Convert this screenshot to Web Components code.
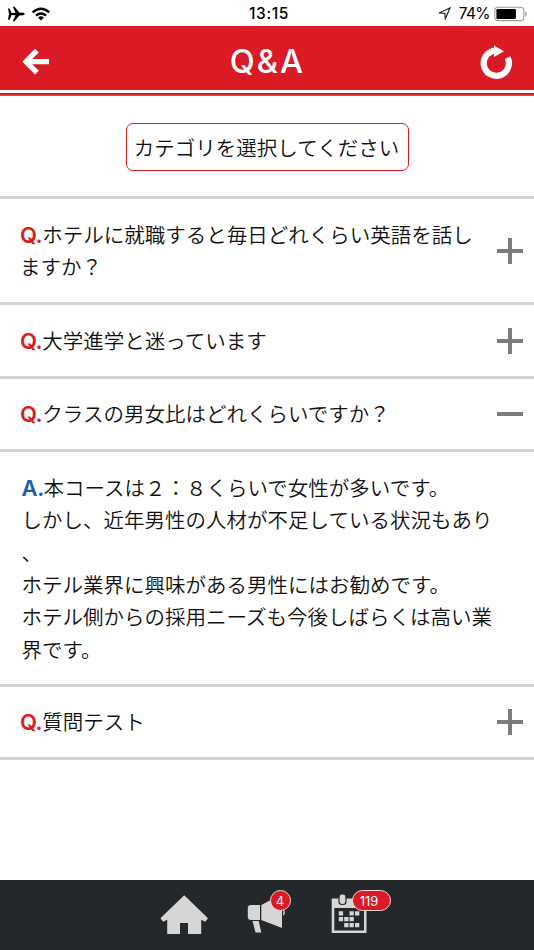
<!DOCTYPE html>
<html lang="ja">
<head>
<meta charset="utf-8">
<title>Q&amp;A</title>
<style>
html,body{margin:0;height:100%;background:#fff}
body{font-family:"Noto Sans CJK JP",sans-serif;color:#111}
</style>
</head>
<body>
<qa-app></qa-app>
<script>
const define = (name, html, init) => customElements.define(name, class extends HTMLElement {
  constructor() {
    super();
    const t = document.createElement('template');
    t.innerHTML = html;
    this.attachShadow({mode: 'open'}).append(t.content.cloneNode(true));
  }
  connectedCallback() { if (init) init(this, this.shadowRoot); }
});

define('status-bar', `
<style>
:host{display:grid;grid-template-columns:1fr auto 1fr;align-items:center;height:26px;box-sizing:border-box;padding:0 6px 0 7px;font-family:Inter,sans-serif;color:#000}
.l,.r{display:flex;align-items:center}
.r{justify-content:flex-end}
svg{display:block}
.t{font-size:15.5px;font-weight:500;letter-spacing:.6px;line-height:26px;padding:1px 0 0 3px}
.p{font-size:15.5px;font-weight:400;letter-spacing:-.6px;margin:0 4px 0 8px;line-height:26px;padding-top:1px}
</style>
<div class="l">
<svg width="18" height="16" viewBox="0 0 18 16"><path d="M1 2.5h1.6L4.6 7l4-.3L5.8.8h1.7l4.8 5.8 3.9.2q1.5.4 1.5 1.2t-1.5 1.2l-3.9.2-4.8 5.8H5.8l2.8-5.9-4-.3-2 4.7H1L2 8z"/></svg>
<svg width="20" height="16" viewBox="0 0 20 16" style="margin-left:6px"><g fill="none" stroke="#000" stroke-width="2.4"><path d="M1.7 6.3q8.3-7 16.6 0"/><path d="M4.9 9.6q5.1-4.1 10.2 0"/></g><path d="M7.1 11.5q2.9-2.3 5.8 0L10 14.4z"/></svg>
</div>
<span class="t">13:15</span>
<div class="r">
<svg width="13" height="13" viewBox="0 0 13 13"><path d="M1 6 12 1 7.3 11.7 6.8 6.3z" fill="none" stroke="#222" stroke-width="1.2"/></svg>
<span class="p">74%</span>
<svg width="34" height="16" viewBox="0 0 34 16"><rect x=".8" y="1.2" width="29" height="13.4" rx="3.2" fill="none" stroke="#999" stroke-width="1.1"/><rect x="2.4" y="3" width="19.5" height="10" rx="1.2"/><path d="M31.3 5.5q1.7.7 1.7 2.5t-1.7 2.5z" fill="#999"/></svg>
</div>`);

define('title-bar', `
<style>
:host{display:block;height:70px}
.bar{display:grid;grid-template-columns:60px 1fr 60px;align-items:center;height:64px;background:#da1a24}
.line{margin-top:3px;height:3px;background:linear-gradient(#da1a24 67%,#e04a52 67%)}
.title{justify-self:center;font:500 32.5px/60px Inter,sans-serif;letter-spacing:2px;color:#fff;margin:6px 0 0 1px}
svg{display:block}
</style>
<div class="bar">
<svg width="60" height="64" viewBox="0 26 60 64"><path d="M22.3 60.7 35 47.8l3.8 3.7-6.6 6.5H49v5.2H32.2l6.6 6.6-3.8 3.7z" fill="#fff"/></svg>
<span class="title"><slot></slot></span>
<svg width="60" height="64" viewBox="474 26 60 64"><path d="M496.2 49.6A12.6 12.6 0 1 0 507.6 56.6" fill="none" stroke="#fff" stroke-width="6.2"/><path d="M494 44.6 504 50.2 494 56z" fill="#fff"/></svg>
</div>
<div class="line"></div>`);

define('category-select', `
<style>
:host{display:flex;justify-content:center;height:100px;align-items:center;box-sizing:border-box;padding-top:2px}
button{all:unset;box-sizing:border-box;width:283px;height:48px;border:1.5px solid #da1a24;outline:0;border-radius:7px;text-align:center;font-size:20.5px;font-weight:350;line-height:43px;white-space:nowrap;color:#111;padding-right:1px}
</style>
<button><slot></slot></button>`);

define('toggle-mark', `
<style>
:host{display:block;width:26px;height:26px}
svg{display:block}
:host([open]) .v{display:none}
</style>
<svg width="26" height="26"><path d="M0 13h26" stroke="#7c7c7c" stroke-width="4"/><path class="v" d="M13 0v26" stroke="#7c7c7c" stroke-width="4"/></svg>`);

define('qa-question', `
<style>
:host{display:flex;align-items:center;justify-content:space-between;height:var(--h,71px);padding:0 11px 0 20px;border-top:3px solid #d3d3d3}
.text{font-size:20.5px;font-weight:350;line-height:32.4px;white-space:pre;padding-bottom:1px}
.q{display:inline-block;width:22.3px;font:600 22px/1 Inter,sans-serif;letter-spacing:-.6px;color:#da1a24}
</style>
<div class="text"><span class="q">Q.</span><slot></slot></div><toggle-mark></toggle-mark>`,
(el, root) => root.querySelector('toggle-mark').toggleAttribute('open', el.hasAttribute('open')));

define('qa-answer', `
<style>
:host{display:flex;align-items:center;height:232px;padding:0 20px 0 21.5px;border-top:3px solid #d3d3d3}
.text{font-size:20.5px;font-weight:350;line-height:32.35px;white-space:pre}
.a{display:inline-block;width:22px;font:600 22px/1 Inter,sans-serif;letter-spacing:-.3px;color:#1d5cb4}
</style>
<div class="text"><span class="a">A.</span><slot></slot></div>`);

define('count-badge', `
<style>
:host{position:absolute;box-sizing:border-box;height:21px;border:1.5px solid #f1d6d7;border-radius:11px;background:#da1a24;color:#fff;font:400 13px/20px Inter,sans-serif;text-align:center}
</style><slot></slot>`);

define('tab-bar', `
<style>
:host{display:flex;align-items:flex-start;height:70px;background:#24282b;padding-left:160px;box-sizing:border-box}
.tab{position:relative;height:70px}
.tab svg{display:block}
.home{width:86px}.news{width:84px}.cal{width:64px}
.news count-badge{left:23.5px;top:10px;width:21px}
.cal count-badge{left:22px;top:10px;width:39px;padding-right:5px}
</style>
<div class="tab home"><svg width="50" height="70" viewBox="160 880 50 70"><path d="M184.2 895.2 208 918.2l-2.8 3.5-4-2V934H188v-11h-8v11h-12.8v-14.3l-4 2-2.8-3.5z" fill="#d5d6d5"/></svg></div>
<div class="tab news"><svg width="50" height="70" viewBox="246 880 50 70"><g fill="#d5d6d5"><path d="M251 905h9v15h-9q-3.2 0-3.2-3v-9q0-3 3.2-3z"/><path d="M261.3 905 282 894v34l-20.7-8z"/><path d="M252.5 921h6.2l2.6 11.5h-5.8z"/><path d="M283.5 909q3 4-.5 7z"/></g></svg><count-badge>4</count-badge></div>
<div class="tab cal"><svg width="50" height="70" viewBox="330 880 50 70"><path d="M331.7 898.5h34.8V933h-34.8z" fill="#d5d6d5"/><path d="M334.3 908h29.7v22.5h-29.7z" fill="#24282b"/><rect x="339" y="894" width="7" height="10.5" rx="3" fill="#d5d6d5" stroke="#24282b" stroke-width="1.2"/><path d="M338.8 911.2h4.3v4.3h-4.3zM349.5 911.2h4.3v4.3h-4.3zM355 911.2h4.3v4.3H355zM338.8 917h4.3v4.3h-4.3zM344.2 917h4.3v4.3h-4.3zM349.5 917h4.3v4.3h-4.3zM344.2 923h4.3v4.3h-4.3zM349.5 923h4.3v4.3h-4.3zM355 923h4.3v4.3H355z" fill="#d5d6d5"/></svg><count-badge>119</count-badge></div>`);

define('qa-app', `
<style>
:host{display:flex;flex-direction:column;width:534px;height:950px;overflow:hidden;background:#fff}
.list{display:flex;flex-direction:column;border-bottom:3px solid #d3d3d3}
.space{flex:1}
qa-question,qa-answer{flex:none}
</style>
<status-bar></status-bar>
<title-bar>Q&amp;A</title-bar>
<category-select>カテゴリを選択してください</category-select>
<div class="list">
<qa-question style="--h:103px">ホテルに就職すると毎日どれくらい英語を話し<br>ますか？</qa-question>
<qa-question>大学進学と迷っています</qa-question>
<qa-question open style="--h:70px">クラスの男女比はどれくらいですか？</qa-question>
<qa-answer>本コースは２：８くらいで女性が多いです。<br>しかし、近年男性の人材が不足している状況もあり<br>、<br>ホテル業界に興味がある男性にはお勧めです。<br>ホテル側からの採用ニーズも今後しばらくは高い業<br>界です。</qa-answer>
<qa-question style="--h:70px">質問テスト</qa-question>
</div>
<div class="space"></div>
<tab-bar></tab-bar>`);
</script>
</body>
</html>
